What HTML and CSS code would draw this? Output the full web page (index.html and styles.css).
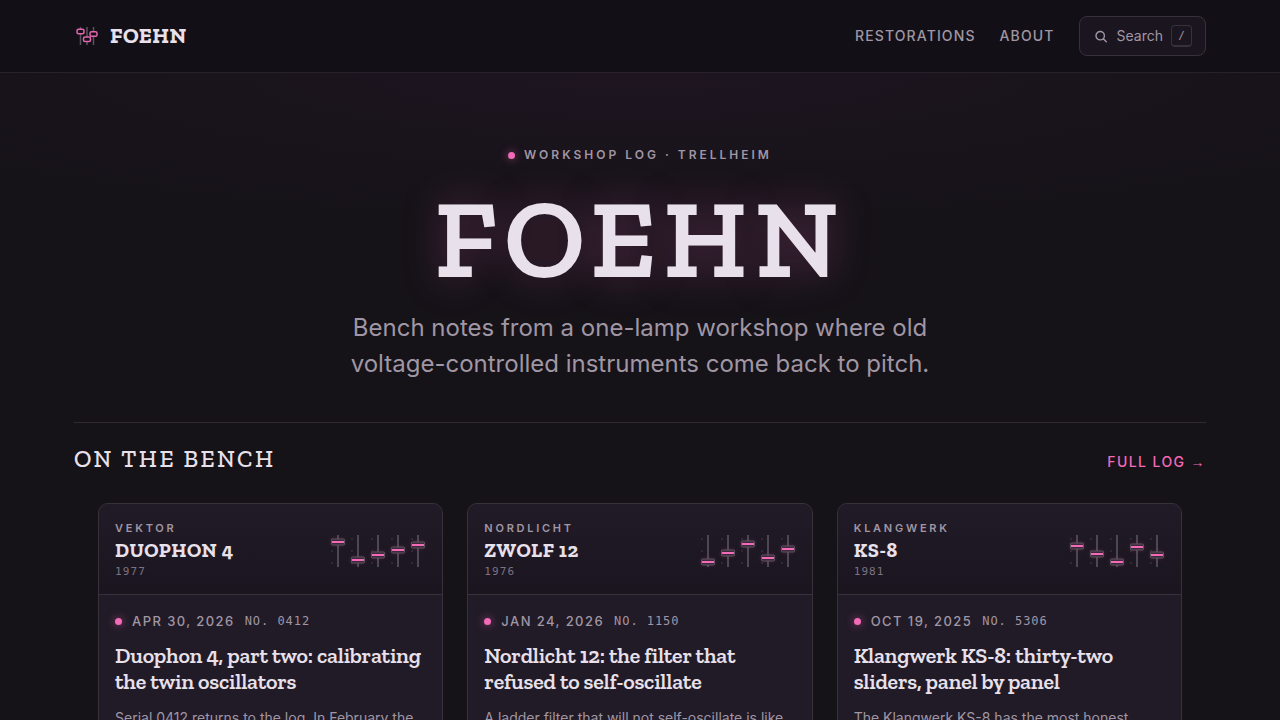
FILE: index.html
```html
<!DOCTYPE html>
<html lang="en">
<head>
  <meta charset="UTF-8">
  <meta name="viewport" content="width=device-width, initial-scale=1.0">
  <title>Foehn</title>
  <link rel="stylesheet" href="styles.css">
</head>
<body>
  <header class="site-header">
    <div class="wrap site-header-inner">
      <a class="brand" href="#">
        <svg class="brand-mark" viewBox="0 0 26 26" aria-hidden="true">
          <path class="brand-track" d="M6.5 4v18M13 4v18M19.5 4v18"/>
          <rect class="brand-knob" x="3" y="6.3" width="7" height="4.5" rx="1.5"/>
          <rect class="brand-knob" x="9.5" y="14" width="7" height="4.5" rx="1.5"/>
          <rect class="brand-knob" x="16" y="8.7" width="7" height="4.5" rx="1.5"/>
        </svg>
        <span>FOEHN</span>
      </a>
      <nav class="site-nav">
        <a href="#">Restorations</a>
        <a href="#">About</a>
        <button type="button" class="search-btn">
          <svg viewBox="0 0 15 15" aria-hidden="true">
            <circle cx="6.2" cy="6.7" r="4.2"/>
            <path d="M9.3 9.8l3 3"/>
          </svg>
          <span>Search</span>
          <kbd>/</kbd>
        </button>
      </nav>
    </div>
  </header>

  <main>
    <section class="hero">
      <p class="eyebrow"><span class="led"></span>Workshop log · Trellheim</p>
      <h1>FOEHN</h1>
      <p class="lede">Bench notes from a one-lamp workshop where old voltage-controlled instruments come back to pitch.</p>
    </section>

    <section class="wrap">
      <div class="section-head">
        <h2>On the bench</h2>
        <a href="#">Full log <span class="arrow">→</span></a>
      </div>

      <div class="cards">
        <!-- Duophon 4 -->
        <article class="card">
          <div class="panel">
            <div>
              <p class="maker">Vektor</p>
              <p class="model">Duophon 4</p>
              <p class="year">1977</p>
            </div>
            <svg class="faders" viewBox="0 -2 96 38" aria-hidden="true">
              <defs>
                <g id="tracks">
                  <path class="ticks" d="M1 6h2M1 18h2M1 30h2M21 6h2M21 18h2M21 30h2M41 6h2M41 18h2M41 30h2M61 6h2M61 18h2M61 30h2M81 6h2M81 18h2M81 30h2"/>
                  <path class="track" d="M8 2v32M28 2v32M48 2v32M68 2v32M88 2v32"/>
                </g>
                <g id="cap">
                  <rect class="cap" x="-6.5" y="-3" width="13" height="6" rx="1"/>
                  <path class="cap-line" d="M-6 0h12"/>
                </g>
              </defs>
              <use href="#tracks"/>
              <use href="#cap" x="8" y="9"/>
              <use href="#cap" x="28" y="27"/>
              <use href="#cap" x="48" y="22"/>
              <use href="#cap" x="68" y="17"/>
              <use href="#cap" x="88" y="12"/>
            </svg>
          </div>
          <div class="card-body">
            <p class="meta"><span class="led"></span><time datetime="2026-04-30">Apr 30, 2026</time><span class="serial">No. 0412</span></p>
            <h3>Duophon 4, part two: calibrating the twin oscillators</h3>
            <p class="excerpt">Serial 0412 returns to the log. In February the</p>
          </div>
        </article>

        <!-- Zwolf 12 -->
        <article class="card">
          <div class="panel">
            <div>
              <p class="maker">Nordlicht</p>
              <p class="model">Zwolf 12</p>
              <p class="year">1976</p>
            </div>
            <svg class="faders" viewBox="0 -2 96 38" aria-hidden="true">
              <use href="#tracks"/>
              <use href="#cap" x="8" y="29"/>
              <use href="#cap" x="28" y="20"/>
              <use href="#cap" x="48" y="11"/>
              <use href="#cap" x="68" y="25"/>
              <use href="#cap" x="88" y="16"/>
            </svg>
          </div>
          <div class="card-body">
            <p class="meta"><span class="led"></span><time datetime="2026-01-24">Jan 24, 2026</time><span class="serial">No. 1150</span></p>
            <h3>Nordlicht 12: the filter that refused to self-oscillate</h3>
            <p class="excerpt">A ladder filter that will not self-oscillate is like</p>
          </div>
        </article>

        <!-- KS-8 -->
        <article class="card">
          <div class="panel">
            <div>
              <p class="maker">Klangwerk</p>
              <p class="model">KS-8</p>
              <p class="year">1981</p>
            </div>
            <svg class="faders" viewBox="0 -2 96 38" aria-hidden="true">
              <use href="#tracks"/>
              <use href="#cap" x="8" y="13"/>
              <use href="#cap" x="28" y="21"/>
              <use href="#cap" x="48" y="29"/>
              <use href="#cap" x="68" y="14"/>
              <use href="#cap" x="88" y="22"/>
            </svg>
          </div>
          <div class="card-body">
            <p class="meta"><span class="led"></span><time datetime="2025-10-19">Oct 19, 2025</time><span class="serial">No. 5306</span></p>
            <h3>Klangwerk KS-8: thirty-two sliders, panel by panel</h3>
            <p class="excerpt">The Klangwerk KS-8 has the most honest</p>
          </div>
        </article>
      </div>
    </section>
  </main>
</body>
</html>
```
FILE: styles.css
```css
:root {
  --bg: #151218;
  --surface: #1b1520;
  --raised: #211b27;
  --line: #37313c;
  --text: #e8e0ea;
  --muted: #a096a4;
  --dim: #7c7381;
  --pink: #f26ab8;
  --slab: "Zilla Slab", "DejaVu Serif Condensed", "DejaVu Serif", serif;
  --sans: Inter, sans-serif;
  --mono: "DejaVu Sans Mono", monospace;
}

* {
  box-sizing: border-box;
}
html {
  overflow-x: hidden;
  scrollbar-width: none;
}
body {
  margin: 0;
  background: var(--bg);
  color: var(--text);
  font-family: var(--sans);
  font-size: 16px;
}
h1,
h2,
h3,
p {
  margin: 0;
}
a {
  color: inherit;
  text-decoration: none;
}
.wrap {
  max-width: 1180px;
  margin: 0 auto;
  padding: 0 24px;
}

/* Header */
.site-header {
  background: #121016;
  border-bottom: 1px solid #272129;
}
.site-header-inner {
  display: flex;
  align-items: center;
  justify-content: space-between;
  padding-top: 16px;
  padding-bottom: 16px;
}
.brand {
  display: flex;
  align-items: center;
  gap: 10px;
  font-family: var(--slab);
  font-weight: 700;
  font-size: 22px;
  line-height: 24px;
  letter-spacing: 0.02em;
}
.brand-mark {
  width: 26px;
  height: 26px;
  fill: none;
}
.brand-track {
  stroke: #59515d;
  stroke-width: 1.5;
}
.brand-knob {
  fill: #121016;
  stroke: #e465ae;
  stroke-width: 1.5;
}
.site-nav {
  display: flex;
  align-items: center;
  gap: 24px;
  color: var(--muted);
  font-size: 14px;
  font-weight: 500;
  line-height: 22px;
}
.site-nav a {
  letter-spacing: 0.08em;
  text-transform: uppercase;
}
.search-btn {
  display: flex;
  align-items: center;
  gap: 8px;
  height: 40px;
  padding: 0 13px 0 14px;
  background: var(--surface);
  border: 1px solid var(--line);
  border-radius: 8px;
  color: var(--muted);
  font-family: var(--sans);
  font-size: 14px;
  line-height: 22px;
}
.search-btn svg {
  width: 15px;
  height: 15px;
  fill: none;
  stroke: currentColor;
  stroke-width: 1.4;
  stroke-linecap: round;
}
.search-btn kbd {
  width: 21px;
  padding: 2px 0;
  border: 1px solid var(--line);
  border-bottom-width: 2px;
  border-radius: 4px;
  font-family: var(--mono);
  font-size: 11px;
  line-height: 15px;
  text-align: center;
}

/* Hero */
.hero {
  display: flex;
  flex-direction: column;
  align-items: center;
  padding: 72px 24px 40px;
  background: radial-gradient(ellipse 70% 150px at 50% 0, #1e1520, transparent);
  text-align: center;
}
.led {
  flex: none;
  width: 7px;
  height: 7px;
  border-radius: 50%;
  background: var(--pink);
  box-shadow: 0 0 8px rgba(242, 106, 184, 0.6);
}
.eyebrow {
  display: flex;
  align-items: center;
  gap: 9px;
  color: var(--muted);
  font-size: 12px;
  font-weight: 600;
  line-height: 20px;
  letter-spacing: 0.25em;
  text-transform: uppercase;
}
.hero h1 {
  font-family: var(--slab);
  font-size: 112px;
  font-weight: 600;
  line-height: 112px;
  letter-spacing: 0.06em;
  margin: 18px 0 15px;
  text-shadow: 0 0 40px rgba(242, 106, 184, 0.3);
}
.lede {
  max-width: 620px;
  color: var(--muted);
  font-size: 24px;
  line-height: 36px;
}

/* Bench */
.section-head {
  display: flex;
  align-items: baseline;
  justify-content: space-between;
  padding: 20px 0 28px;
  border-top: 1px solid #302a34;
}
.section-head h2 {
  font-family: var(--slab);
  font-size: 24px;
  font-weight: 500;
  line-height: 32px;
  letter-spacing: 0.1em;
  text-transform: uppercase;
}
.section-head a {
  color: var(--pink);
  font-size: 14px;
  font-weight: 500;
  letter-spacing: 0.1em;
  text-transform: uppercase;
}
.arrow {
  font-family: "Liberation Sans", sans-serif;
}
.cards {
  display: grid;
  grid-template-columns: repeat(3, 1fr);
  gap: 24px;
  padding: 0 24px;
}
.card {
  overflow: hidden;
  background: var(--raised);
  border: 1px solid var(--line);
  border-radius: 10px;
}
.panel {
  display: flex;
  align-items: center;
  justify-content: space-between;
  padding: 16px 16px 14px;
  background: linear-gradient(#211b27, #1b1520);
  border-bottom: 1px solid var(--line);
}
.maker {
  color: var(--muted);
  font-size: 11px;
  font-weight: 600;
  line-height: 16px;
  letter-spacing: 0.25em;
  text-transform: uppercase;
}
.model {
  font-family: var(--slab);
  font-size: 20px;
  font-weight: 700;
  line-height: 28px;
  letter-spacing: 0.03em;
  text-transform: uppercase;
}
.year {
  color: var(--dim);
  font-family: var(--mono);
  font-size: 11px;
  line-height: 16px;
  letter-spacing: 0.1em;
}
.faders {
  width: 96px;
  height: 38px;
  overflow: visible;
}
.ticks {
  stroke: #302935;
  stroke-width: 2;
}
.track {
  stroke: #4e4652;
  stroke-width: 2;
}
.cap {
  fill: #3c2a3b;
  stroke: #5e5260;
  stroke-width: 1;
  filter: drop-shadow(0 0 2px rgba(242, 106, 184, 0.15));
}
.cap-line {
  stroke: var(--pink);
  stroke-width: 2;
}
.card-body {
  padding: 16px 16px 24px;
}
.meta {
  display: flex;
  align-items: center;
  gap: 10px;
  color: var(--muted);
  font-size: 13px;
  font-weight: 500;
  line-height: 20px;
  letter-spacing: 0.11em;
  text-transform: uppercase;
}
.serial {
  font-family: var(--mono);
  font-size: 12px;
  font-weight: 400;
  letter-spacing: 0.08em;
}
.card h3 {
  font-family: var(--slab);
  font-size: 22px;
  font-weight: 600;
  line-height: 26px;
  letter-spacing: -0.01em;
  margin: 12px 0;
}
.excerpt {
  color: var(--muted);
  font-size: 14px;
  line-height: 22px;
}
```
